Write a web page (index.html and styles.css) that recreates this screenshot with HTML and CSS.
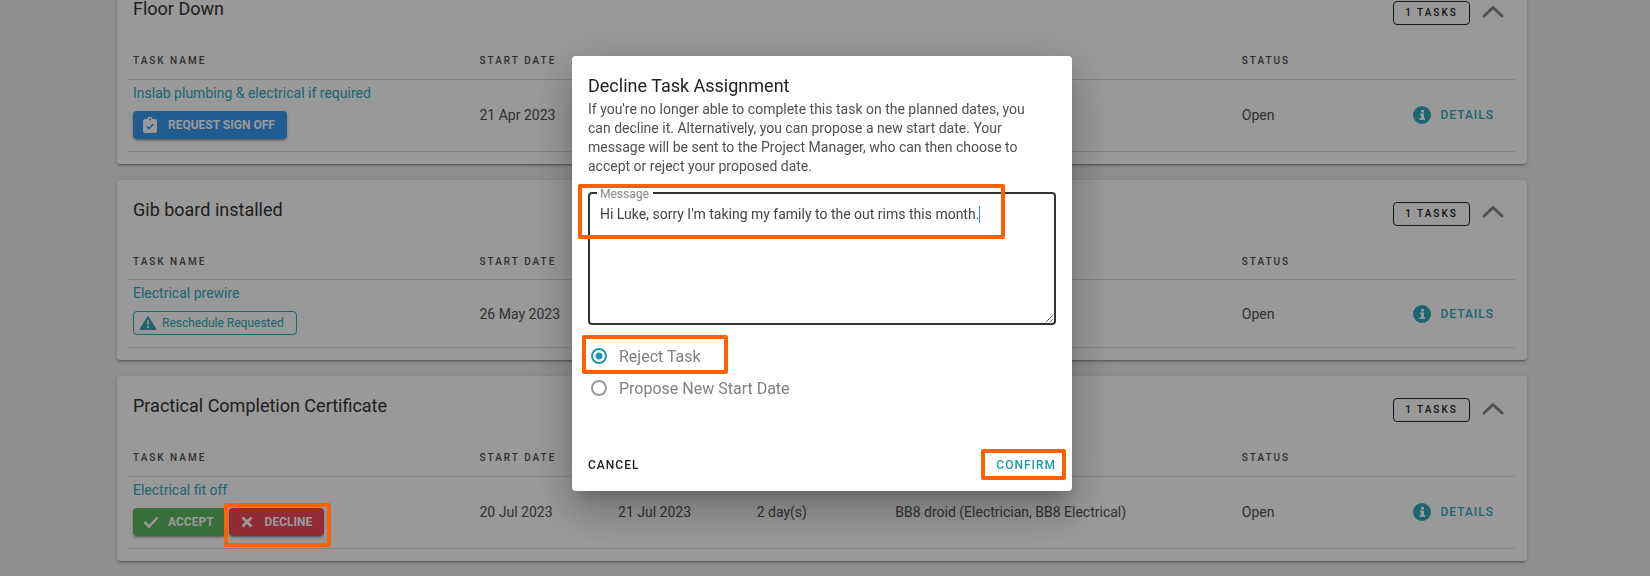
FILE: index.html
```html
<!DOCTYPE html>
<html lang="en">
<head>
  <meta charset="UTF-8">
  <meta name="viewport" content="width=device-width, initial-scale=1.0">
  <title>Tasks - Decline Task Assignment</title>
  <link rel="stylesheet" href="styles.css">
</head>
<body>
  <!-- Shared icons -->
  <svg class="icon-defs" width="0" height="0" aria-hidden="true">
    <symbol id="icon-info" viewBox="0 0 18 18">
      <circle cx="9" cy="9" r="9" fill="currentColor"/>
      <path d="M8 4h3v2.500H8zM7 7.500h4v4.500h1v2H6.500v-2H8V9.500H7z" fill="#fff"/>
    </symbol>
    <symbol id="icon-chevron" viewBox="0 0 22 13">
      <path d="M2 11l9-8.500L20 11" fill="none" stroke="currentColor" stroke-width="3" stroke-linecap="round" stroke-linejoin="round"/>
    </symbol>
  </svg>

  <main class="page">
    <section class="card">
      <header class="card-header">
        <h2>Floor Down</h2>
        <span class="count">1 Tasks</span>
        <button class="toggle" type="button" aria-label="Collapse"><svg width="22" height="13"><use href="#icon-chevron"/></svg></button>
      </header>
      <table>
        <thead>
          <tr>
            <th class="wide">Task Name</th>
            <th>Start Date</th>
            <th></th>
            <th></th>
            <th class="wide"></th>
            <th>Status</th>
            <th></th>
          </tr>
        </thead>
        <tbody>
          <tr>
            <td>
              <a class="task-link" href="#">Inslab plumbing &amp; electrical if required</a>
              <div class="actions">
                <button class="btn btn-blue" type="button">
                  <svg width="14" height="16" viewBox="0 0 14 16"><path d="M2 2h2.500a2.500 2.500 0 0 1 5 0H12a2 2 0 0 1 2 2v10a2 2 0 0 1-2 2H2a2 2 0 0 1-2-2V4a2 2 0 0 1 2-2z" fill="#fff"/><circle cx="7" cy="2.500" r="1" fill="#379af0"/><path d="M4 9.500l2 2 4.500-4.500" fill="none" stroke="#379af0" stroke-width="1.500"/></svg>
                  Request Sign Off
                </button>
              </div>
            </td>
            <td>21 Apr 2023</td>
            <td></td>
            <td></td>
            <td></td>
            <td>Open</td>
            <td><a class="details" href="#"><svg width="18" height="18"><use href="#icon-info"/></svg>Details</a></td>
          </tr>
        </tbody>
      </table>
    </section>

    <section class="card">
      <header class="card-header">
        <h2>Gib board installed</h2>
        <span class="count">1 Tasks</span>
        <button class="toggle" type="button" aria-label="Collapse"><svg width="22" height="13"><use href="#icon-chevron"/></svg></button>
      </header>
      <table>
        <thead>
          <tr>
            <th class="wide">Task Name</th>
            <th>Start Date</th>
            <th></th>
            <th></th>
            <th class="wide"></th>
            <th>Status</th>
            <th></th>
          </tr>
        </thead>
        <tbody>
          <tr>
            <td>
              <a class="task-link" href="#">Electrical prewire</a>
              <div class="actions">
                <span class="chip">
                  <svg width="18" height="14" viewBox="0 0 18 14"><path d="M9 1l7.500 12.200h-15z" fill="currentColor" stroke="currentColor" stroke-width="1.500" stroke-linejoin="round"/><path d="M9 4.500v4M9 10v2" stroke="#fff" stroke-width="1.800"/></svg>
                  Reschedule Requested
                </span>
              </div>
            </td>
            <td>26 May 2023</td>
            <td></td>
            <td></td>
            <td></td>
            <td>Open</td>
            <td><a class="details" href="#"><svg width="18" height="18"><use href="#icon-info"/></svg>Details</a></td>
          </tr>
        </tbody>
      </table>
    </section>

    <section class="card">
      <header class="card-header">
        <h2>Practical Completion Certificate</h2>
        <span class="count">1 Tasks</span>
        <button class="toggle" type="button" aria-label="Collapse"><svg width="22" height="13"><use href="#icon-chevron"/></svg></button>
      </header>
      <table>
        <thead>
          <tr>
            <th class="wide">Task Name</th>
            <th>Start Date</th>
            <th></th>
            <th></th>
            <th class="wide"></th>
            <th>Status</th>
            <th></th>
          </tr>
        </thead>
        <tbody>
          <tr>
            <td>
              <a class="task-link" href="#">Electrical fit off</a>
              <div class="actions">
                <button class="btn btn-green" type="button">
                  <svg width="16" height="12" viewBox="0 0 16 12"><path d="M1.500 6l4.500 4.500L14.500 1.500" fill="none" stroke="#fff" stroke-width="2.500"/></svg>
                  Accept
                </button>
                <button class="btn btn-red" type="button">
                  <svg width="12" height="12" viewBox="0 0 12 12"><path d="M1.500 1.500l9 9M10.500 1.500l-9 9" fill="none" stroke="#fff" stroke-width="2.800"/></svg>
                  Decline
                </button>
              </div>
            </td>
            <td>20 Jul 2023</td>
            <td>21 Jul 2023</td>
            <td>2 day(s)</td>
            <td>BB8 droid (Electrician, BB8 Electrical)</td>
            <td>Open</td>
            <td><a class="details" href="#"><svg width="18" height="18"><use href="#icon-info"/></svg>Details</a></td>
          </tr>
        </tbody>
      </table>
    </section>
  </main>

  <div class="overlay">
    <!-- Marker over the Decline button, stays above the scrim -->
    <span class="highlight highlight-decline"></span>

    <form class="dialog" role="dialog" aria-labelledby="dialog-title">
      <h1 id="dialog-title">Decline Task Assignment</h1>
      <p>If you're no longer able to complete this task on the planned dates, you can decline it. Alternatively, you can propose a new start date. Your message will be sent to the Project Manager, who can then choose to accept or reject your proposed date.</p>

      <div class="field">
        <label for="message">Message</label>
        <textarea id="message" spellcheck="false">Hi Luke, sorry I'm taking my family to the out rims this month.</textarea>
        <span class="caret"></span>
        <span class="highlight highlight-message"></span>
      </div>

      <div class="options">
        <label class="option">
          <input type="radio" name="choice" checked>
          Reject Task
          <span class="highlight highlight-reject"></span>
        </label>
        <label class="option">
          <input type="radio" name="choice">
          Propose New Start Date
        </label>
      </div>

      <div class="dialog-actions">
        <button class="text-btn" type="button">Cancel</button>
        <button class="text-btn confirm" type="button">Confirm<span class="highlight highlight-confirm"></span></button>
      </div>
    </form>
  </div>
</body>
</html>
```
FILE: styles.css
```css
/* Basic styling */
* {
  box-sizing: border-box;
}

body {
  margin: 0;
  height: 100vh;
  overflow: hidden;
  background: #eee;
  color: #505050;
  font-family: Roboto, sans-serif;
  font-size: 14px;
}

button,
textarea {
  font-family: inherit;
}

a {
  text-decoration: none;
}

.icon-defs {
  position: absolute;
}

/* Task groups, list is scrolled past the top of the first one */
.page {
  display: flex;
  flex-direction: column;
  gap: 16px;
  margin-top: -21px;
  padding: 0 123px 0 117px;
}

.card {
  background: #fff;
  border-radius: 4px;
  padding: 16px 12px 12px;
  box-shadow: 0 3px 1px -2px rgba(0, 0, 0, 0.2), 0 2px 2px rgba(0, 0, 0, 0.14), 0 1px 5px rgba(0, 0, 0, 0.12);
}

.card-header {
  display: flex;
  align-items: center;
  height: 36px;
  padding: 0 11px 0 4px;
}

h2 {
  flex: 1;
  margin: 0 0 8px;
  color: #333;
  font-size: 18px;
  font-weight: 400;
  line-height: 24px;
}

.count {
  width: 77px;
  border: 1px solid #222;
  border-radius: 4px;
  color: #222;
  font-size: 10px;
  font-weight: 500;
  letter-spacing: 2px;
  line-height: 22px;
  text-align: center;
  text-transform: uppercase;
}

.toggle {
  display: flex;
  margin: 0 0 4px 12px;
  padding: 0;
  border: 0;
  background: none;
  color: #888;
}

table {
  width: 100%;
  border-collapse: collapse;
  table-layout: fixed;
}

th,
td {
  width: 10%;
  padding: 0 4px;
  border-bottom: 1px solid #ddd;
  text-align: left;
  white-space: nowrap;
}

.wide {
  width: 25%;
}

th {
  height: 48px;
  padding-top: 12px;
  font-size: 10px;
  font-weight: 500;
  letter-spacing: 2px;
  text-transform: uppercase;
}

td:first-child {
  padding-top: 4px;
  padding-bottom: 12px;
}

.task-link,
.details {
  color: #31a8ba;
}

.task-link {
  display: block;
  line-height: 18px;
}

.actions {
  display: flex;
  gap: 3px;
  margin-top: 9px;
}

.btn {
  display: flex;
  align-items: center;
  gap: 11px;
  height: 28px;
  padding: 0 12px 0 10px;
  border: 0;
  border-radius: 4px;
  color: #fff;
  font-size: 12px;
  font-weight: 700;
  text-transform: uppercase;
  box-shadow: 0 3px 1px -2px rgba(0, 0, 0, 0.2), 0 2px 2px rgba(0, 0, 0, 0.14), 0 1px 5px rgba(0, 0, 0, 0.12);
}

.btn-blue {
  background: #379af0;
}

.btn-green {
  gap: 9px;
  background: #5cb860;
}

.btn-red {
  gap: 12px;
  padding-left: 12px;
  background: #f44859;
}

.chip {
  display: flex;
  align-items: center;
  gap: 5px;
  height: 24px;
  padding: 0 12px 0 5px;
  border: 1px solid #31a8ba;
  border-radius: 4px;
  color: #31a8ba;
  font-size: 12px;
}

.details {
  display: flex;
  justify-content: flex-end;
  align-items: center;
  gap: 9px;
  padding-right: 17px;
  font-size: 12px;
  font-weight: 500;
  letter-spacing: 1px;
  text-transform: uppercase;
}

/* Dialog */
.overlay {
  position: fixed;
  inset: 0;
  display: flex;
  justify-content: center;
  align-items: flex-start;
  padding: 56px 6px 0 0;
  background: rgba(0, 0, 0, 0.4);
}

.dialog {
  width: 100%;
  max-width: 500px;
  padding: 16px;
  background: #fff;
  border-radius: 4px;
  box-shadow: 0 11px 15px -7px rgba(0, 0, 0, 0.2), 0 24px 38px 3px rgba(0, 0, 0, 0.14), 0 9px 46px 8px rgba(0, 0, 0, 0.12);
}

h1 {
  margin: 0;
  color: #222;
  font-size: 18px;
  font-weight: 400;
  line-height: 28px;
}

p {
  margin: 0;
  padding-right: 20px;
  line-height: 19px;
}

.field {
  position: relative;
  margin-top: 16px;
}

.field label {
  position: absolute;
  top: -6px;
  left: 9px;
  padding: 0 4px 0 3px;
  background: #fff;
  color: #888;
  font-size: 12px;
  line-height: 16px;
}

textarea {
  display: block;
  width: 100%;
  height: 133px;
  padding: 10px;
  border: 2px solid #333;
  border-radius: 4px;
  outline: 0;
  color: #444;
  font-size: 14px;
  line-height: 20px;
  resize: vertical;
}

.caret {
  position: absolute;
  top: 14px;
  left: 391px;
  width: 1px;
  height: 17px;
  background: #1c98aa;
}

.options {
  margin-top: 15px;
}

.option {
  position: relative;
  display: flex;
  align-items: center;
  gap: 12px;
  height: 32px;
  padding-left: 3px;
  color: #808080;
  font-size: 16px;
}

.option input {
  appearance: none;
  width: 16px;
  height: 16px;
  margin: 0;
  border: 2px solid #999;
  border-radius: 50%;
}

.option input:checked {
  border-color: #1c98aa;
  background: radial-gradient(#1c98aa 3px, #fff 4px);
}

.dialog-actions {
  display: flex;
  justify-content: space-between;
  margin-top: 51px;
}

.text-btn {
  position: relative;
  padding: 0;
  border: 0;
  background: none;
  color: #222;
  font-size: 12px;
  font-weight: 500;
  letter-spacing: 1px;
  line-height: 20px;
  text-transform: uppercase;
}

.confirm {
  color: #1c98aa;
}

/* Orange markers */
.highlight {
  position: absolute;
  border: 4px solid #ff6100;
  border-radius: 2px;
  pointer-events: none;
}

.highlight-message {
  top: -8px;
  left: -10px;
  width: 427px;
  height: 55px;
}

.highlight-reject {
  top: -5px;
  left: -6px;
  width: 146px;
  height: 39px;
}

.highlight-confirm {
  top: -6px;
  right: -10px;
  width: 85px;
  height: 31px;
}

.highlight-decline {
  top: 503px;
  left: 224px;
  width: 107px;
  height: 44px;
}
```
